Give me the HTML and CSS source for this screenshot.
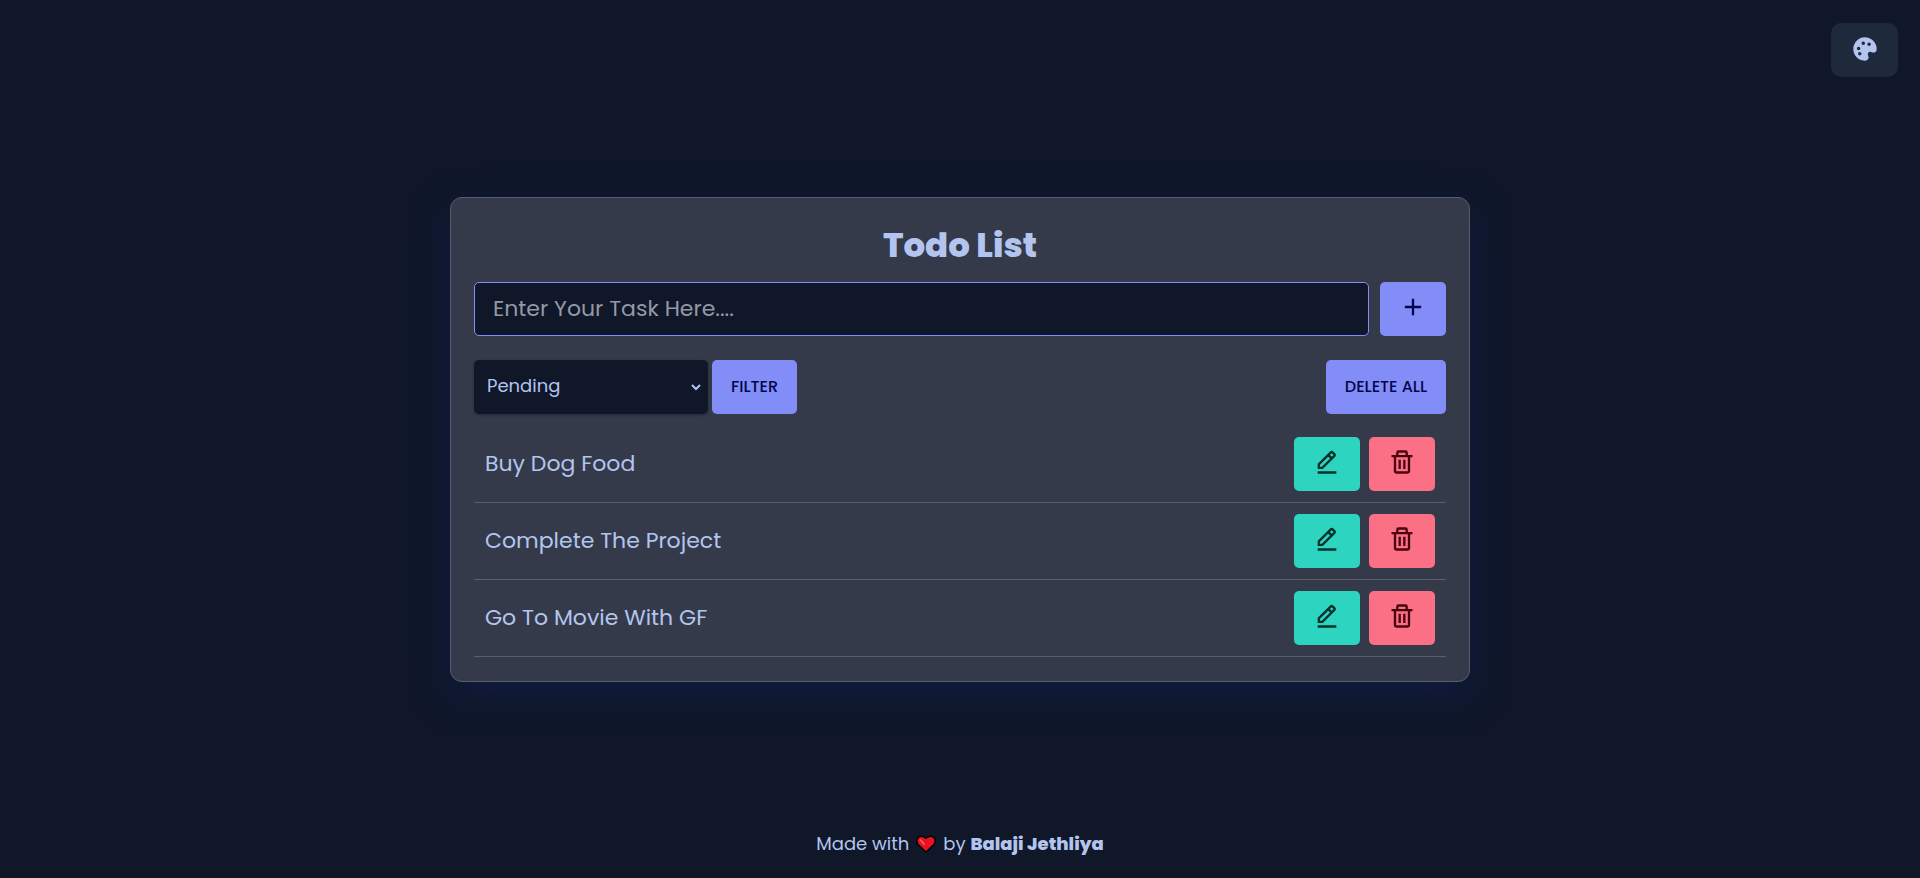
FILE: index.html
```html
<!DOCTYPE html>
<html lang="en">
<head>
<meta charset="utf-8">
<meta name="viewport" content="width=device-width, initial-scale=1">
<title>Todo List</title>
<link rel="stylesheet" href="styles.css">
</head>
<body class="page">
<svg class="sprite" aria-hidden="true">
  <symbol id="pencil" viewBox="0 0 24 24">
    <path fill="currentColor" d="M19.045 7.401c.378-.378.586-.88.586-1.414s-.208-1.036-.586-1.414l-1.586-1.586c-.378-.378-.88-.586-1.414-.586s-1.036.208-1.413.585L4 13.585V18h4.413L19.045 7.401zm-3-3 1.587 1.585-1.59 1.584-1.586-1.585 1.589-1.584zM6 16v-1.585l7.04-7.018 1.586 1.586L7.587 16H6zm-2 4h16v2H4z"/>
  </symbol>
  <symbol id="trash" viewBox="0 0 24 24">
    <path fill="currentColor" d="M5 20a2 2 0 0 0 2 2h10a2 2 0 0 0 2-2V8h2V6h-4V4a2 2 0 0 0-2-2H9a2 2 0 0 0-2 2v2H3v2h2zM9 4h6v2H9zM8 8h9v12H7V8z"/>
    <path fill="currentColor" d="M9 10h2v8H9zm4 0h2v8h-2z"/>
  </symbol>
</svg>
<header class="topbar">
  <button class="btn btn-theme" type="button" aria-label="Change theme">
    <svg class="icon" viewBox="0 0 24 24" aria-hidden="true"><path fill="currentColor" d="M13.4 2.096a10.08 10.08 0 0 0-8.937 3.331A10.054 10.054 0 0 0 2.096 13.4c.53 3.894 3.458 7.207 7.285 8.246a9.982 9.982 0 0 0 2.618.354l.142-.001a3.001 3.001 0 0 0 2.516-1.426 2.989 2.989 0 0 0 .153-2.879l-.199-.416a1.919 1.919 0 0 1 .094-1.912 2.004 2.004 0 0 1 2.576-.755l.412.197c.412.198.85.299 1.301.299A3.022 3.022 0 0 0 22 12.14a9.935 9.935 0 0 0-.353-2.76c-1.04-3.826-4.353-6.754-8.247-7.284zM6.5 13a1.5 1.5 0 1 1 0-3 1.5 1.5 0 0 1 0 3zm1 4.5a1.5 1.5 0 1 1 0-3 1.5 1.5 0 0 1 0 3zm3-9a1.5 1.5 0 1 1 0-3 1.5 1.5 0 0 1 0 3zm5 1a1.5 1.5 0 1 1 0-3 1.5 1.5 0 0 1 0 3z"/></svg>
  </button>
</header>
<main class="card">
  <h1 class="title">Todo List</h1>
  <form class="entry">
    <input class="entry-input" type="text" placeholder="Enter Your Task Here...." aria-label="Task">
    <button class="btn btn-primary" type="button" aria-label="Add task">
      <svg class="icon" viewBox="0 0 24 24" aria-hidden="true"><path fill="currentColor" d="M19 11h-6V5h-2v6H5v2h6v6h2v-6h6z"/></svg>
    </button>
  </form>
  <div class="toolbar">
    <div class="filter">
      <div class="select-wrap">
        <select class="select" aria-label="Filter tasks">
          <option>Pending</option>
          <option>Completed</option>
        </select>
        <svg class="chevron" viewBox="0 0 12 8" aria-hidden="true"><path d="M2 2l4 4 4-4" fill="none" stroke="currentColor" stroke-width="2"/></svg>
      </div>
      <button class="btn btn-primary" type="button">FILTER</button>
    </div>
    <button class="btn btn-primary" type="button">DELETE ALL</button>
  </div>
  <ul class="tasks">
    <li class="task">
      <span class="task-name">Buy Dog Food</span>
      <button class="btn btn-edit" type="button" aria-label="Edit"><svg class="icon"><use href="#pencil"/></svg></button>
      <button class="btn btn-delete" type="button" aria-label="Delete"><svg class="icon"><use href="#trash"/></svg></button>
    </li>
    <li class="task">
      <span class="task-name">Complete The Project</span>
      <button class="btn btn-edit" type="button" aria-label="Edit"><svg class="icon"><use href="#pencil"/></svg></button>
      <button class="btn btn-delete" type="button" aria-label="Delete"><svg class="icon"><use href="#trash"/></svg></button>
    </li>
    <li class="task">
      <span class="task-name">Go To Movie With GF</span>
      <button class="btn btn-edit" type="button" aria-label="Edit"><svg class="icon"><use href="#pencil"/></svg></button>
      <button class="btn btn-delete" type="button" aria-label="Delete"><svg class="icon"><use href="#trash"/></svg></button>
    </li>
  </ul>
</main>
<footer class="footer">
  <span>Made with</span>
  <svg class="heart" viewBox="0 0 20 18" role="img" aria-label="love"><path d="M10 17L2 9.500Q-.5 5.500 2 2.700Q5.500-.5 10 3.200Q14.500-.5 18 2.700Q20.500 5.500 18 9.500Z" fill="#e81224" stroke="#000" stroke-width="1.500" stroke-linejoin="round"/><path d="M4.500 5L8 9" stroke="#f4705c" stroke-width="1.500" stroke-linecap="round"/></svg>
  <span>by <b class="author">Balaji Jethliya</b></span>
</footer>
</body>
</html>
```

FILE: styles.css
```css
*, *::before, *::after {
  box-sizing: border-box;
}

.page {
  margin: 0;
  min-height: 100vh;
  display: grid;
  grid-template-rows: 1fr auto 1fr;
  justify-items: center;
  background: #0f1729;
  color: #b3c5ef;
  font-family: Poppins, Inter, sans-serif;
  font-size: 18px;
  line-height: 28px;
}

.sprite {
  display: none;
}

.topbar {
  justify-self: end;
  padding: 23px 22px;
}

.btn {
  display: inline-flex;
  align-items: center;
  justify-content: center;
  flex: none;
  min-width: 66px;
  height: 54px;
  padding: 0 19px;
  border: 0;
  border-radius: 5px;
  font-family: inherit;
  font-size: 16px;
  font-weight: 500;
  cursor: pointer;
}

.btn-theme {
  min-width: 67px;
  border-radius: 10px;
  background: #1e293b;
  color: #b3c5ef;
}

.btn-primary {
  background: #828df8;
  color: #02064a;
}

.btn-edit {
  background: #2dd4bf;
  color: #03312b;
}

.btn-delete {
  background: #fb7085;
  color: #4a040f;
}

.icon {
  width: 28px;
  height: 28px;
  margin-bottom: 3px;
}

.card {
  width: 100%;
  max-width: 1020px;
  padding: 23px 23px 24px;
  border: 1px solid #575e6c;
  border-radius: 12px;
  background: #343a49;
  box-shadow: 0 12px 36px #111b3f;
}

.title {
  margin: 0 0 13px;
  font-size: 34px;
  font-weight: 800;
  line-height: 48px;
  text-align: center;
}

.entry {
  display: flex;
  gap: 11px;
}

.entry-input {
  flex: 1;
  min-width: 0;
  height: 54px;
  padding: 0 18px;
  border: 1px solid #828df8;
  border-radius: 5px;
  background: #0f1729;
  color: #b3c5ef;
  font-family: inherit;
  font-size: 22px;
}

.entry-input::placeholder {
  color: #9499a5;
  opacity: 1;
}

.toolbar {
  display: flex;
  justify-content: space-between;
  padding: 24px 0 12px;
}

.filter {
  display: flex;
  gap: 4px;
}

.select-wrap {
  position: relative;
  width: 234px;
}

.select {
  appearance: none;
  width: 100%;
  height: 54px;
  padding: 0 13px 2px;
  border: 0;
  border-radius: 5px;
  background: #0f1729;
  color: #b3c5ef;
  box-shadow: 0 1px 3px #222938;
  font-family: inherit;
  font-size: 18px;
}

.chevron {
  position: absolute;
  top: 23px;
  right: 6px;
  width: 12px;
  height: 8px;
  pointer-events: none;
}

.tasks {
  margin: 0;
  padding: 0;
  list-style: none;
}

.task {
  display: flex;
  align-items: center;
  gap: 9px;
  padding: 11px;
  border-bottom: 1px solid #575e6c;
}

.task-name {
  flex: 1;
  font-size: 22px;
}

.footer {
  align-self: end;
  display: flex;
  align-items: center;
  gap: 7px;
  padding: 20px;
}

.heart {
  width: 20px;
  height: 18px;
}

.author {
  font-weight: 800;
}
```
